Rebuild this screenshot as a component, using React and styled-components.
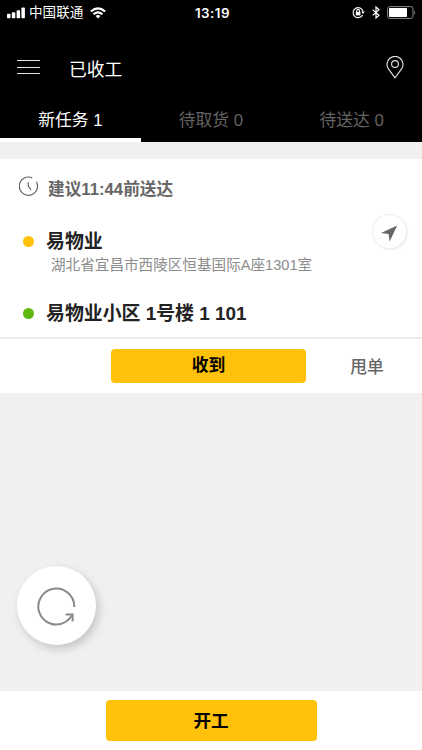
import React, { useState } from 'react'
import styled, { createGlobalStyle } from 'styled-components'

const GlobalStyle = createGlobalStyle`
* { box-sizing : border-box; }
body {
    margin : 0;
    background-color : #f0f0f0;
    font-family : "Liberation Sans", "Noto Sans CJK SC", sans-serif;
}
button {
    font-family : inherit;
    border : none;
    padding : 0;
    cursor : pointer;
}
svg { display : block; }
`;

const Page = styled.div`
height : 750px;
display : flex;
flex-direction : column;
overflow : hidden;
background-color : #f0f0f0;
`;

const Header = styled.header`
background-color : #000;
color : #fff;
height : 142px;
`;

const StatusBar = styled.div`
height : 24px;
padding : 0 6px 0 7px;
display : grid;
grid-template-columns : 1fr auto 1fr;
align-items : center;
`;

const StatusGroup = styled.div`
display : flex;
align-items : center;
gap : ${props => props.$gap}px;
justify-content : ${props => props.$end ? "flex-end" : "flex-start"};
`;

const Carrier = styled.span`
font-size : 13.6px;
line-height : 24px;
margin : 1px 7px 0 4px;
`;

const Clock = styled.span`
font-family : Inter, "Liberation Sans", sans-serif;
font-size : 13.4px;
font-weight : 600;
letter-spacing : 0.5px;
line-height : 24px;
padding-left : 2px;
`;

const NavBar = styled.div`
height : 74px;
padding : 14px 17px 0;
display : flex;
align-items : center;
`;

const NavTitle = styled.h1`
flex : 1;
margin : 0 0 0 28px;
font-size : 17.8px;
font-weight : 400;
line-height : 26px;
padding-top : 4px;
`;

const Tabs = styled.nav`
height : 44px;
display : grid;
grid-template-columns : repeat(3, 1fr);
`;

const Tab = styled.button`
height : 44px;
background-color : transparent;
color : ${props => props.$active ? "#fff" : "#636363"};
border-bottom : 4px solid ${props => props.$active ? "#fff" : "transparent"};
font-size : 16.8px;
line-height : 34px;
padding-top : 6px;
`;

const Card = styled.section`
margin-top : 17px;
background-color : #fff;
height : 234px;
display : flex;
flex-direction : column;
`;

const CardBody = styled.div`
height : 178px;
padding : 17px 16px 0 19px;
`;

const TimeRow = styled.div`
display : flex;
height : 26px;
color : #666;
`;

const TimeText = styled.span`
margin-left : 9px;
padding-top : 1px;
font-size : 16.7px;
font-weight : 700;
line-height : 26px;
`;

const Stop = styled.div`
display : flex;
align-items : flex-start;
margin-top : ${props => props.$gap}px;
`;

const Dot = styled.span`
width : 11px;
height : 11px;
margin : 9px 12px 0 4px;
border-radius : 50%;
background-color : ${props => props.color};
`;

const StopInfo = styled.div`
flex : 1;
`;

const StopName = styled.div`
height : 28px;
padding-top : 1px;
color : #222;
font-size : 18.9px;
font-weight : 700;
line-height : 28px;
white-space : nowrap;
`;

const StopAddress = styled.div`
margin-left : 5px;
color : #8c8c8c;
font-size : 14.6px;
line-height : 20px;
`;

const NaviButton = styled.button`
width : 33px;
height : 33px;
margin-top : -12px;
display : flex;
align-items : center;
justify-content : center;
border-radius : 50%;
background-color : #fff;
box-shadow : 0 0 0 1px #f0f0f0, 1px 1px 3px rgba(0, 0, 0, 0.14);
`;

const CardActions = styled.div`
flex : 1;
border-top : 2px solid #ececec;
display : grid;
grid-template-columns : 111px 195px 1fr;
align-items : center;
`;

const PrimaryButton = styled.button`
grid-column : 2;
width : ${props => props.$width}px;
height : ${props => props.$height}px;
padding-bottom : ${props => props.$lift}px;
border-radius : 4px;
background-color : #ffc10a;
color : #000;
font-size : ${props => props.$size}px;
font-weight : 700;
`;

const DropButton = styled.button`
background-color : transparent;
color : #666;
font-size : 16.8px;
font-weight : 500;
padding : 0 0 1px 6px;
`;

const Blank = styled.div`
flex : 1;
display : flex;
align-items : flex-end;
padding : 0 0 46px 17px;
`;

const RefreshButton = styled.button`
width : 79px;
height : 79px;
padding-right : 2px;
display : flex;
align-items : center;
justify-content : center;
border-radius : 50%;
background-color : #fff;
box-shadow : 3px 4px 10px rgba(0, 0, 0, 0.18);
`;

const Footer = styled.footer`
height : 59px;
background-color : #fff;
display : flex;
align-items : center;
justify-content : center;
`;

const SignalIcon = () => (
    <svg width="18" height="12" viewBox="0 0 18 12" fill="#fff">
        <rect x="0" y="6.8" width="3.5" height="4.4" rx="0.8" />
        <rect x="4.8" y="5.2" width="3.5" height="6" rx="0.8" />
        <rect x="9.6" y="3.2" width="3.5" height="8" rx="0.8" />
        <rect x="14.4" y="0.4" width="3.5" height="10.8" rx="0.8" />
    </svg>
)

const WifiIcon = () => (
    <svg width="16" height="12" viewBox="0 0 16 12" fill="none" stroke="#fff" strokeWidth="2.2">
        <path d="M0.9 4.5 Q8 -1.8 15.1 4.5" />
        <path d="M3.5 7.3 Q8 3.3 12.5 7.3" />
        <path d="M8 11.6 L5.5 9.1 Q8 7 10.5 9.1 Z" fill="#fff" stroke="none" />
    </svg>
)

const LockIcon = () => (
    <svg width="13" height="13" viewBox="0 0 13 13" fill="none" stroke="#fff" strokeWidth="1.1">
        <path d="M10.6 8.9 A5 5 0 1 1 11 5.5" />
        <path d="M9.2 5.6 H12.8 L11 7.9 Z" fill="#fff" stroke="none" />
        <rect x="3.8" y="5.9" width="4.6" height="3.5" fill="#fff" stroke="none" />
        <path d="M4.7 6 V4.8 A1.4 1.4 0 0 1 7.5 4.8 V6" />
    </svg>
)

const BluetoothIcon = () => (
    <svg width="8" height="13" viewBox="0 0 8 13" fill="none" stroke="#fff" strokeWidth="1.2">
        <path d="M0.6 3.6 L7 9.3 L4 12 V1 L7 3.7 L0.6 9.4" />
    </svg>
)

const BatteryIcon = () => (
    <svg width="29" height="13" viewBox="0 0 29 13">
        <rect x="0.6" y="0.6" width="25.4" height="11.8" rx="2.2" fill="none" stroke="#8a8a8a" strokeWidth="1" />
        <rect x="2" y="2" width="18" height="9" rx="0.8" fill="#fff" />
        <path d="M27.2 4.5 Q29 6.5 27.2 8.5 Z" fill="#8a8a8a" />
    </svg>
)

const MenuIcon = () => (
    <svg width="24" height="16" viewBox="0 0 24 16" stroke="#e4e4e4" strokeWidth="1">
        <path d="M0 0.5 H23 M0 7.5 H23 M0 13.5 H23" />
    </svg>
)

const PinIcon = () => (
    <svg width="20" height="24" viewBox="0 0 20 24" fill="none" stroke="#e8e8e8" strokeWidth="1.1">
        <path d="M10 21.9 L3.6 13.2 A8 8 0 1 1 16.4 13.2 Z" />
        <circle cx="10" cy="8" r="3.4" />
    </svg>
)

const ClockIcon = () => (
    <svg width="20" height="21" viewBox="0 0 20 21" fill="none" stroke="#666" strokeWidth="1.2">
        <path d="M13.2 1.9 A9.1 9.1 0 1 0 17.4 5.8" />
        <path d="M9.3 6.2 V10 L12 13.8" />
    </svg>
)

const ArrowIcon = () => (
    <svg width="20" height="20" viewBox="0 0 20 20" fill="#666">
        <path d="M17.2 3.6 L1 11 L8.6 12 L9.6 19.4 Z" />
    </svg>
)

const RefreshIcon = () => (
    <svg width="40" height="40" viewBox="0 0 40 40" fill="none" stroke="#8a8a8a" strokeWidth="2">
        <path d="M38.3 21 A18 18 0 1 0 29.5 36 Q33.5 33.4 36.2 29" />
        <path d="M29.5 28.6 H36.6 V35.6" />
    </svg>
)

const tabs = [
    { id: 1, title: "新任务", count: 1 },
    { id: 2, title: "待取货", count: 0 },
    { id: 3, title: "待送达", count: 0 },
];

const App = () => {
    const [active, setActive] = useState(1);

    return (
        <Page>
            <GlobalStyle />
            <Header>
                <StatusBar>
                    <StatusGroup $gap={0}>
                        <SignalIcon />
                        <Carrier>中国联通</Carrier>
                        <WifiIcon />
                    </StatusGroup>
                    <Clock>13:19</Clock>
                    <StatusGroup $end $gap={7}>
                        <LockIcon />
                        <BluetoothIcon />
                        <BatteryIcon />
                    </StatusGroup>
                </StatusBar>
                <NavBar>
                    <MenuIcon />
                    <NavTitle>已收工</NavTitle>
                    <PinIcon />
                </NavBar>
                <Tabs>
                    {
                        tabs.map(tab => (
                            <Tab key={tab.id} $active={tab.id === active} onClick={() => { setActive(tab.id) }}>
                                {tab.title} {tab.count}
                            </Tab>
                        ))}
                </Tabs>
            </Header>
            <Card>
                <CardBody>
                    <TimeRow>
                        <ClockIcon />
                        <TimeText>建议11:44前送达</TimeText>
                    </TimeRow>
                    <Stop $gap={25}>
                        <Dot color="#ffc10a" />
                        <StopInfo>
                            <StopName>易物业</StopName>
                            <StopAddress>湖北省宜昌市西陵区恒基国际A座1301室</StopAddress>
                        </StopInfo>
                        <NaviButton><ArrowIcon /></NaviButton>
                    </Stop>
                    <Stop $gap={24}>
                        <Dot color="#5fb810" />
                        <StopInfo>
                            <StopName>易物业小区 1号楼 1 101</StopName>
                        </StopInfo>
                    </Stop>
                </CardBody>
                <CardActions>
                    <PrimaryButton $width={195} $height={34} $size={16.8} $lift={4}>收到</PrimaryButton>
                    <DropButton>甩单</DropButton>
                </CardActions>
            </Card>
            <Blank>
                <RefreshButton><RefreshIcon /></RefreshButton>
            </Blank>
            <Footer>
                <PrimaryButton $width={211} $height={41} $size={17.6} $lift={2}>开工</PrimaryButton>
            </Footer>
        </Page>
    )
}

export default App
